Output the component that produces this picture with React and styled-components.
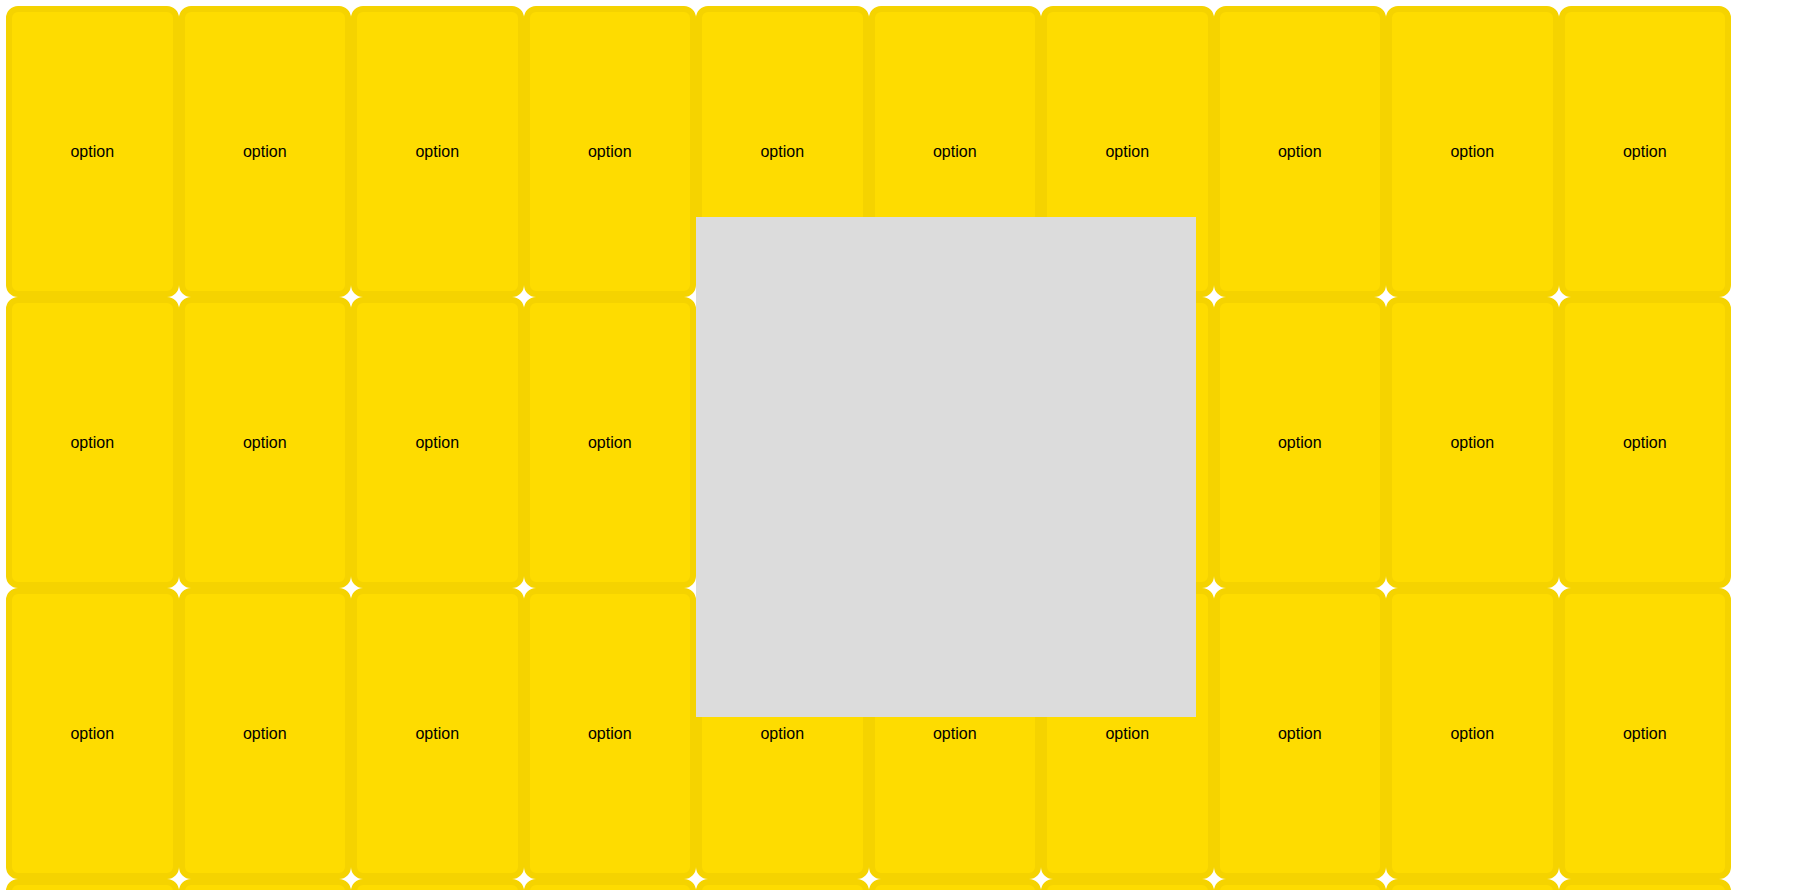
import styled, { createGlobalStyle } from "styled-components";

const GlobalStyle = createGlobalStyle`
  body {
    margin: 0;
    background: #ffffff;
    font-family: "Liberation Sans", Arial, sans-serif;
  }
`;

const Page = styled.div`
  position: relative;
  padding: 6px;
`;

const Grid = styled.div`
  display: grid;
  grid-template-columns: repeat(10, 172.5px);
  grid-auto-rows: 291px;
`;

const Option = styled.div`
  box-sizing: border-box;
  display: flex;
  align-items: center;
  justify-content: center;
  border: 6px solid #f5d300;
  border-radius: 12px;
  background-color: #fedc00;
  color: #000;
  font-size: 16px;
`;

const Overlay = styled.div`
  position: absolute;
  top: 217px;
  left: 696px;
  width: 500px;
  height: 500px;
  background-color: #dcdcdc;
`;

const options = Array.from({ length: 40 }, (_, i) => i);

function App() {
  return (
    <>
      <GlobalStyle />
      <Page>
        <Grid>
          {options.map((i) => (
            <Option key={i}>option</Option>
          ))}
        </Grid>
        <Overlay />
      </Page>
    </>
  );
}

export default App;
